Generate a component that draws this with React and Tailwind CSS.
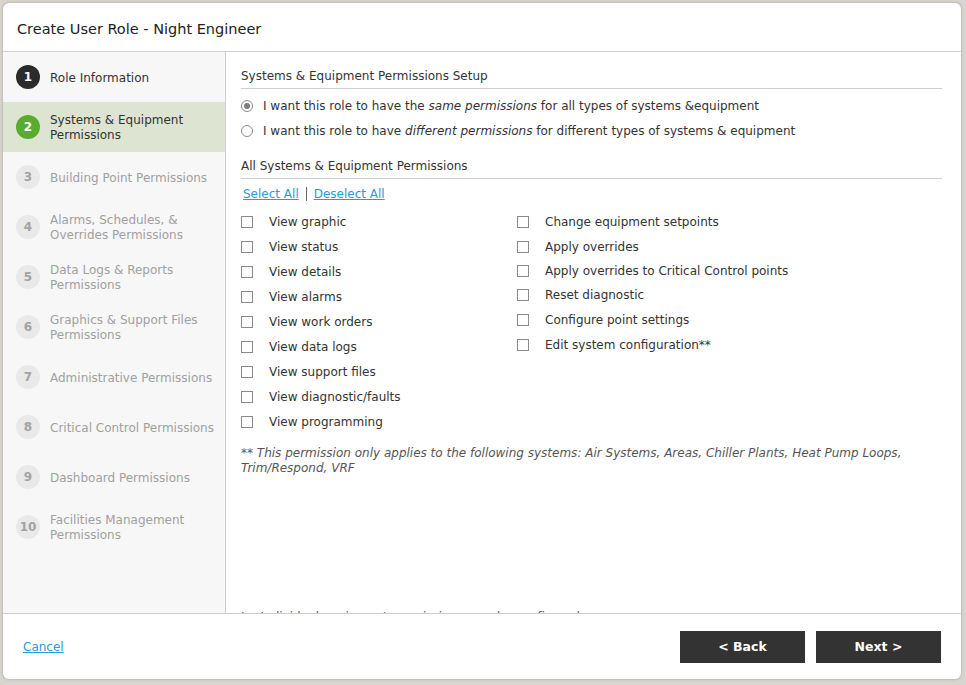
import React from "react";

const steps = [
  { n: 1, label: ["Role Information"], state: "done" },
  { n: 2, label: ["Systems & Equipment", "Permissions"], state: "active" },
  { n: 3, label: ["Building Point Permissions"] },
  { n: 4, label: ["Alarms, Schedules, &", "Overrides Permissions"] },
  { n: 5, label: ["Data Logs & Reports", "Permissions"] },
  { n: 6, label: ["Graphics & Support Files", "Permissions"] },
  { n: 7, label: ["Administrative Permissions"] },
  { n: 8, label: ["Critical Control Permissions"] },
  { n: 9, label: ["Dashboard Permissions"] },
  { n: 10, label: ["Facilities Management", "Permissions"] },
];

const col1 = [
  "View graphic",
  "View status",
  "View details",
  "View alarms",
  "View work orders",
  "View data logs",
  "View support files",
  "View diagnostic/faults",
  "View programming",
];
const col2 = [
  "Change equipment setpoints",
  "Apply overrides",
  "Apply overrides to Critical Control points",
  "Reset diagnostic",
  "Configure point settings",
  "Edit system configuration**",
];

function Step({ n, label, state }) {
  const circle =
    state === "done"
      ? "bg-[#2b2b2b] text-white"
      : state === "active"
      ? "bg-[#5aab2f] text-white"
      : "bg-[#e9e9e9] text-[#a3a3a3]";
  const text = state ? "text-[#333]" : "text-[#a0a0a0]";
  return (
    <div
      className={`flex h-[50px] items-center pl-[13px] ${
        state === "active" ? "bg-[#dde5d2]" : ""
      }`}
    >
      <div
        className={`flex h-[24px] w-[24px] shrink-0 items-center justify-center rounded-full text-[12px] font-bold ${circle}`}
      >
        {n}
      </div>
      <div className={`ml-[10px] pt-[2px] text-[12px] leading-[15px] ${text}`}>
        {label.map((l, i) => (
          <div key={i}>{l}</div>
        ))}
      </div>
    </div>
  );
}

function Check({ label, short }) {
  return (
    <div className={`flex items-center ${short ? "h-[23px]" : "h-[25px]"}`}>
      <div className="h-[12px] w-[12px] shrink-0 border border-[#8a8a8a] bg-white" />
      <span className="ml-[16px]">{label}</span>
    </div>
  );
}

export default function App() {
  return (
    <div
      className="flex h-[685px] w-[966px] bg-[#d7d5ce] p-[3px] pr-[5px] pb-[6px] text-[#333]"
      style={{ fontFamily: "'DejaVu Sans', Verdana, sans-serif" }}
    >
      <div className="flex flex-1 flex-col overflow-hidden rounded-[6px] bg-white shadow-[0_0_3px_rgba(0,0,0,0.25)]">
        <div className="flex h-[49px] shrink-0 items-center border-b border-[#cfcfcf] pl-[14px] pt-[5px] text-[14.5px] text-[#222]">
          Create User Role - Night Engineer
        </div>
        <div className="flex min-h-0 flex-1">
          <div className="w-[223px] shrink-0 border-r border-[#cfcfcf] bg-[#f7f7f7]">
            {steps.map((s) => (
              <Step key={s.n} {...s} />
            ))}
          </div>
          <div className="relative min-w-0 flex-1 overflow-hidden pl-[15px] pr-[19px] text-[12px]">
            <div className="mt-[15px] border-b border-[#cfcfcf] pb-[3px]">
              Systems &amp; Equipment Permissions Setup
            </div>
            <div className="mt-[4px] flex h-[25px] items-center">
              <div className="flex h-[12px] w-[12px] items-center justify-center rounded-full border border-[#8a8a8a]">
                <div className="h-[6px] w-[6px] rounded-full bg-[#7d7d7d]" />
              </div>
              <span className="ml-[10px]">
                I want this role to have the <i>same permissions</i> for all types of systems &amp;equipment
              </span>
            </div>
            <div className="flex h-[25px] items-center">
              <div className="h-[12px] w-[12px] rounded-full border border-[#8a8a8a]" />
              <span className="ml-[10px]">
                I want this role to have <i>different permissions</i> for different types of systems &amp; equipment
              </span>
            </div>
            <div className="mt-[14px] border-b border-[#cfcfcf] pb-[3px]">
              All Systems &amp; Equipment Permissions
            </div>
            <div className="mt-[6px] flex items-center pl-[2px] text-[#2a9bd5]">
              <span className="underline">Select All</span>
              <span className="mx-[7px] h-[14px] w-px bg-[#666]" />
              <span className="underline">Deselect All</span>
            </div>
            <div className="mt-[6px] flex">
              <div className="w-[276px]">
                {col1.map((l) => (
                  <Check key={l} label={l} />
                ))}
              </div>
              <div>
                {col2.map((l, i) => (
                  <Check key={l} label={l} short={i === 2} />
                ))}
              </div>
            </div>
            <div className="mt-[12px] text-[12px] italic leading-[15px] text-[#555]">
              ** This permission only applies to the following systems: Air Systems, Areas, Chiller Plants, Heat Pump Loops, Trim/Respond, VRF
            </div>
            <div className="mt-[132px] text-[#555]">
              <span className="mr-4">I</span>
              Individual equipment permissions may be configured
            </div>
          </div>
        </div>
        <div className="flex h-[66px] shrink-0 items-center border-t border-[#cfcfcf] pl-[20px] pr-[20px] pt-[1px]">
          <a className="text-[12px] text-[#2a9bd5] underline">Cancel</a>
          <div className="ml-auto flex gap-[11px]">
            <button className="h-[32px] w-[125px] bg-[#333] text-[12.5px] font-bold text-white">
              &lt; Back
            </button>
            <button className="h-[32px] w-[125px] bg-[#333] text-[12.5px] font-bold text-white">
              Next &gt;
            </button>
          </div>
        </div>
      </div>
    </div>
  );
}
